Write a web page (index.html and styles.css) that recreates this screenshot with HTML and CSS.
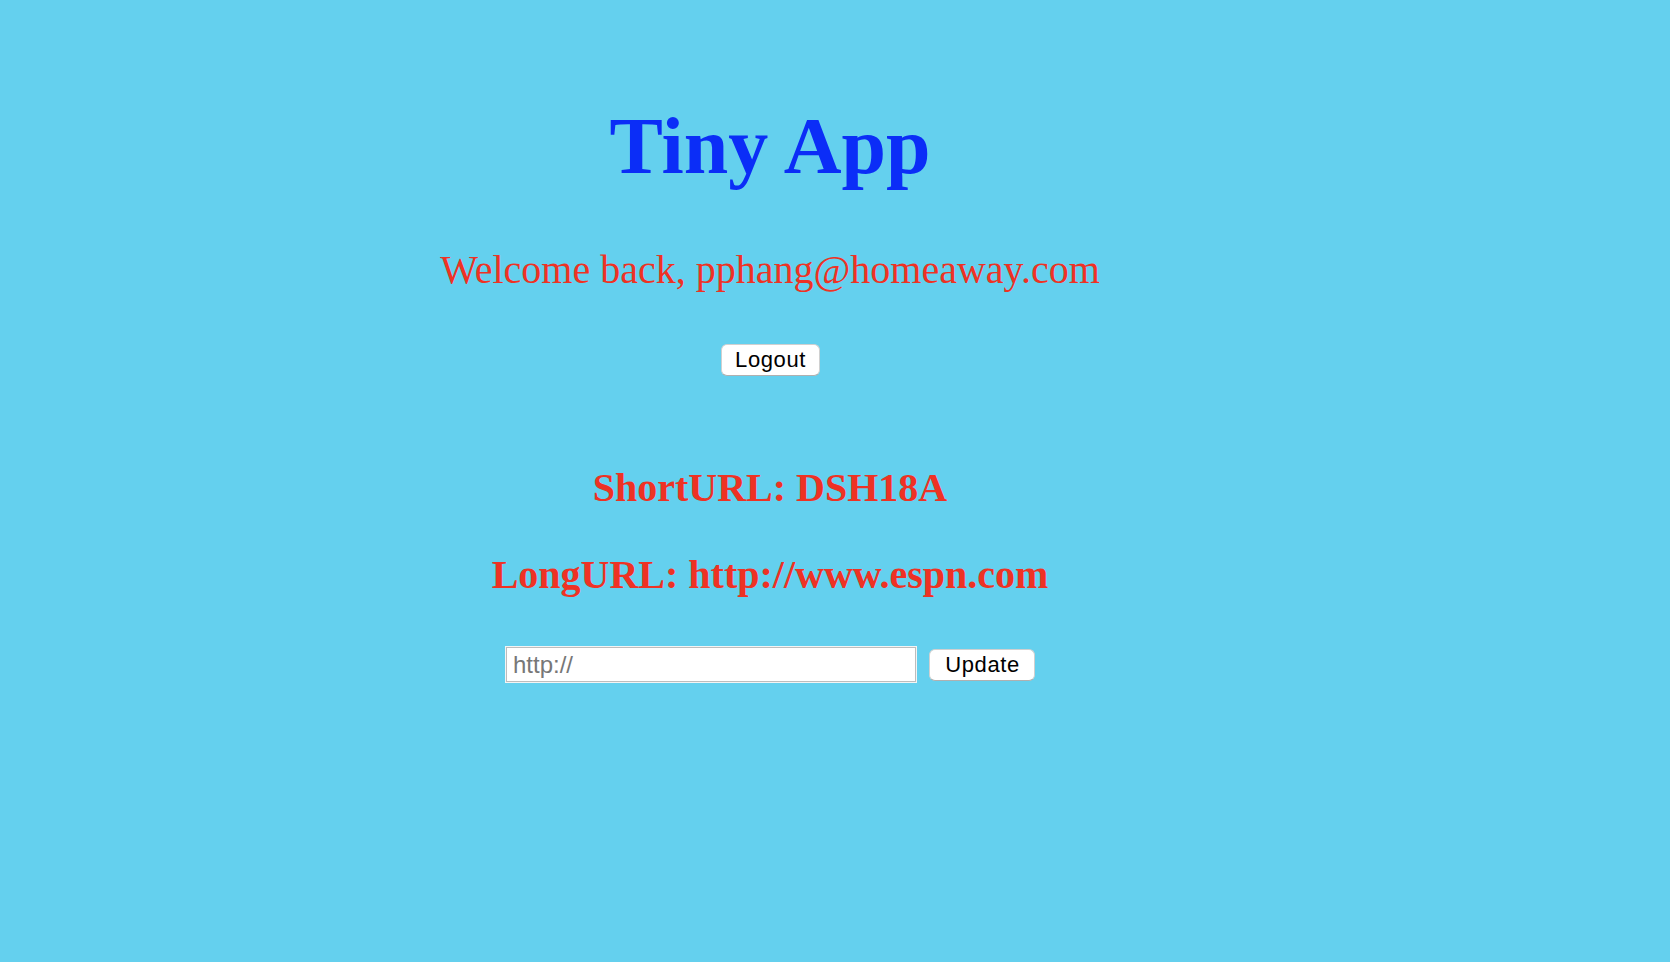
FILE: index.html
```html
<!DOCTYPE html>
<html>
<head>
<meta charset="utf-8">
<title>Tiny App</title>
<link rel="stylesheet" href="styles.css">
</head>
<body>
<div class="page">
  <header class="header">
    <h1 class="title">Tiny App</h1>
    <h2 class="welcome">Welcome back, pphang@homeaway.com</h2>
    <form class="logout-form">
      <button type="button" class="btn">Logout</button>
    </form>
  </header>
  <main class="main">
    <h2 class="url-line">ShortURL: DSH18A</h2>
    <h2 class="url-line long">LongURL: http://www.espn.com</h2>
    <form class="update-form">
      <input class="url-input" type="text" placeholder="http://">
      <button type="button" class="btn update">Update</button>
    </form>
  </main>
</div>
</body>
</html>
```

FILE: styles.css
```css
html, body {
  margin: 0;
  padding: 0;
  background: #64d0ee;
  height: 100%;
}

.page {
  width: 1540px;
  text-align: center;
  font-family: "Liberation Serif", "Times New Roman", serif;
  padding-top: 106px;
}

.title {
  margin: 0;
  font-size: 80px;
  line-height: 80px;
  font-weight: bold;
  color: #0b2df7;
}

.welcome {
  margin: 64px 0 0;
  font-size: 40px;
  line-height: 40px;
  font-weight: normal;
  color: #ee3224;
}

.logout-form {
  margin-top: 54px;
  display: flex;
  justify-content: center;
}

.btn {
  font-family: "Liberation Sans", Arial, sans-serif;
  font-size: 22px;
  letter-spacing: 0.6px;
  color: #000;
  background: #fff;
  border: 1px solid #d0d0d0;
  border-bottom-color: #b0b0b0;
  border-radius: 6px;
  height: 32px;
  padding: 0 0 0 1px;
  width: 99px;
  line-height: 30px;
  box-sizing: border-box;
}

.main {
  padding-top: 92px;
}

.url-line {
  margin: 0;
  font-size: 40px;
  line-height: 40px;
  font-weight: bold;
  color: #ee3224;
}

.url-line.long {
  margin-top: 47px;
}

.update-form {
  margin-top: 51px;
  display: flex;
  justify-content: center;
  align-items: center;
  gap: 12px;
}

.url-input {
  width: 412px;
  height: 37px;
  box-sizing: border-box;
  margin: 0;
  border: 1px solid #f4f4f4;
  box-shadow: inset 0 0 0 1px #bdbdbd;
  background: #fff;
  padding: 0 7px;
  font-family: "Liberation Sans", Arial, sans-serif;
  font-size: 24px;
  outline: none;
}

.url-input::placeholder {
  color: #777;
}

.btn.update {
  width: 106px;
}
```
